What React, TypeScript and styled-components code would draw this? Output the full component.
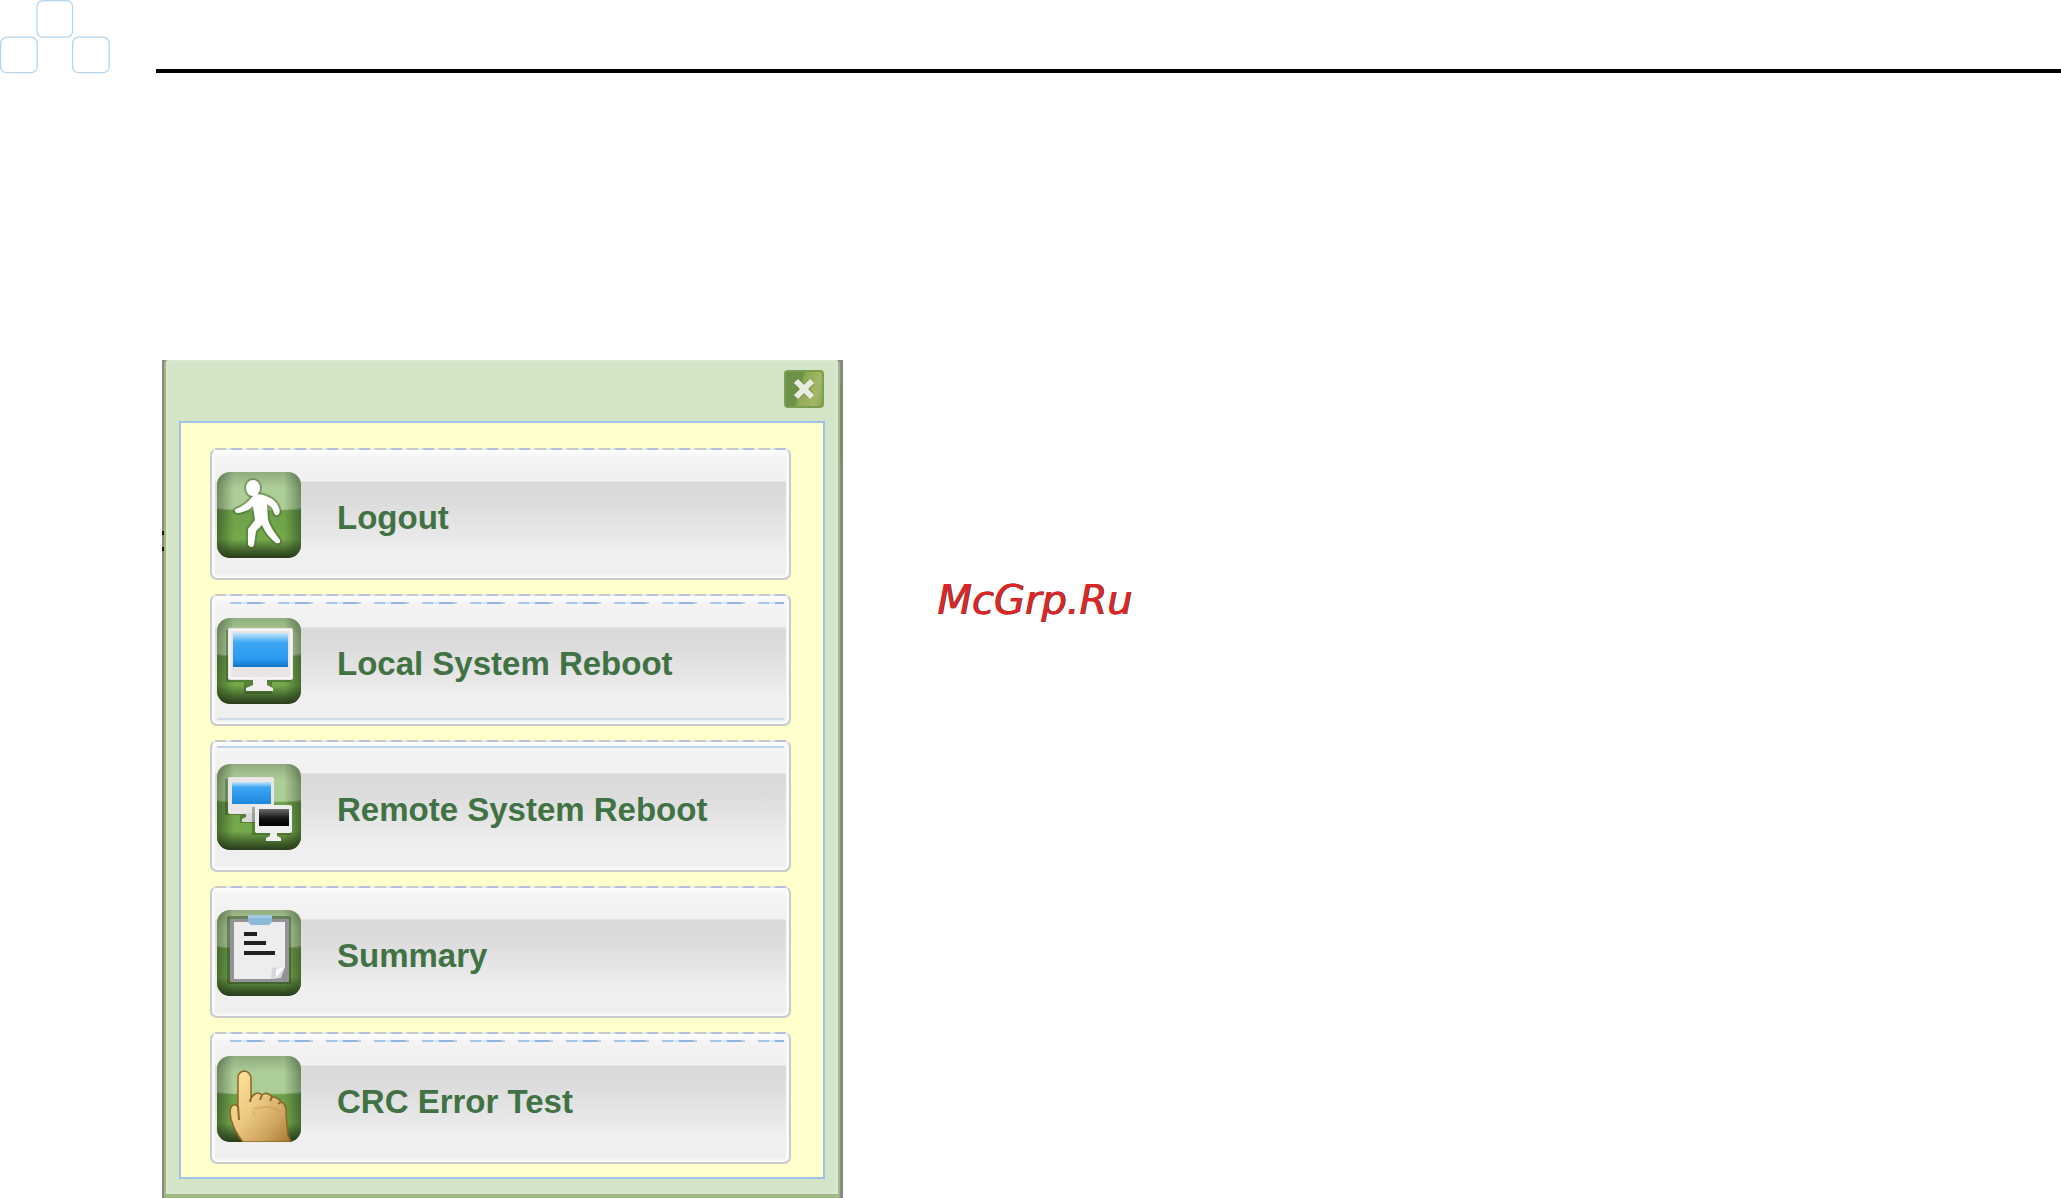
import React from "react";
import styled, { createGlobalStyle, css } from "styled-components";

const GlobalStyle = createGlobalStyle`
  *, *::before, *::after { box-sizing: border-box; }
  body { margin: 0; background: #ffffff; font-family: "Liberation Sans", Arial, sans-serif; }
`;

const Header = styled.header`
  display: flex;
  align-items: flex-end;
  gap: 46px;
`;

const Logo = styled.svg`
  display: block;
  flex: none;
`;

const Rule = styled.hr`
  flex: 1;
  height: 4px;
  margin: 0 0 1px;
  border: 0;
  background: #000000;
`;

const Main = styled.main`
  display: flex;
  align-items: flex-start;
  gap: 94px;
  padding: 286px 0 0 162px;
`;

const Dialog = styled.section`
  flex: none;
  width: 681px;
  padding: 0 3px 0 2px;
  background:
    linear-gradient(#201810, #201810) 0 171px / 2px 4px no-repeat,
    linear-gradient(#201810, #201810) 0 187px / 2px 4px no-repeat,
    linear-gradient(#83886c, #83886c) 100% 24px / 3px 79px no-repeat,
    #898989;
`;

const Frame = styled.div`
  padding: 0 13px 15px;
  border: solid #9dba85;
  border-width: 0 2px 4px;
  border-radius: 4px 4px 0 0;
  background: #d4e4c7;
  box-shadow: inset 0 0 3px 2px #dce8d4;
  display: flex;
  flex-direction: column;
`;

const TitleBar = styled.div`
  display: flex;
  justify-content: flex-end;
  padding: 10px 1px 13px 0;
`;

const CloseButton = styled.button`
  display: flex;
  align-items: center;
  justify-content: center;
  width: 40px;
  height: 38px;
  padding: 0;
  border: 2px solid #7a9f50;
  border-radius: 4px;
  background: linear-gradient(105deg, #6c9148 0 38%, #8faa52 46%, #a5b766 80%, #8ba653);
  cursor: pointer;
`;

const Menu = styled.nav`
  display: flex;
  flex-direction: column;
  gap: 14px;
  padding: 25px 32px 13px 29px;
  border: 2px solid #a0c2e6;
  background: #ffffcb;
`;

type Trim = "plain" | "dashed" | "dashedLined" | "lined";

const innerDashes = css`
  repeating-linear-gradient(90deg, transparent 0 13px, #a9c6ea 13px 24px, #d2e8fa 24px 30px, #8fb5e6 30px 44px, #c3cbd4 44px 48px)
  5px 6px / 567px 2px no-repeat,
`;

const trims = {
  plain: css``,
  dashed: innerDashes,
  dashedLined: css`
    ${innerDashes}
    linear-gradient(#cfdaea, #cfdaea) 5px 122px / 567px 2px no-repeat,
  `,
  lined: css`linear-gradient(#bdd2ef, #bdd2ef) 5px 4px / 567px 2px no-repeat,`,
};

const MenuButton = styled.button<{ $trim: Trim }>`
  display: flex;
  align-items: center;
  gap: 36px;
  height: 132px;
  padding: 2px 5px 0;
  border: 2px solid #c9cacf;
  border-top-color: transparent;
  border-radius: 7px;
  background:
    ${({ $trim }) => trims[$trim]}
    linear-gradient(
      #fdfdfd 0, #f4f4f4 8px, #f0f0f0 31px, #d9d9d9 32px, #dcdcdc 52px,
      #e9e9e9 88px, #efefef 100px, #efefef 123px, #fbfbfb 128px
    ) padding-box,
    repeating-linear-gradient(90deg, #e6e7e6 0 5px, #c9c9c6 5px 16px, #e6e7e6 16px 21px, #b4c0d4 21px 32px) border-box;
  box-shadow: inset 4px 0 1px -1px #fafafc, inset -4px 0 1px -1px #fafafc;
  color: #417243;
  font: bold 33px/40px "Liberation Sans", Arial, sans-serif;
  text-align: left;
  cursor: pointer;
`;

const Icon = styled.svg`
  display: block;
  flex: none;
`;

const Label = styled.span`
  padding-top: 5px;
`;

const Watermark = styled.p`
  margin: 216px 0 0;
  color: #de2525;
  font: italic 40px/48px "DejaVu Sans", Verdana, sans-serif;
  text-shadow: 1px 0 0 #5b3038;
`;

function Tile({ children }: { children: React.ReactNode }) {
  const id = React.useId();
  return (
    <Icon width="84" height="86" viewBox="0 0 84 86" aria-hidden="true">
      <defs>
        <linearGradient id={`${id}base`} x1="0" y1="0" x2="0" y2="1">
          <stop offset="0" stopColor="#8ba878" />
          <stop offset="0.2" stopColor="#a4c88c" />
          <stop offset="0.43" stopColor="#9bc37f" />
          <stop offset="0.45" stopColor="#6d9f4a" />
          <stop offset="0.78" stopColor="#75aa4b" />
          <stop offset="0.92" stopColor="#40602a" />
          <stop offset="1" stopColor="#293b1c" />
        </linearGradient>
        <linearGradient id={`${id}side`} x1="0" y1="0" x2="1" y2="0">
          <stop offset="0" stopColor="#263c1b" stopOpacity="0.55" />
          <stop offset="0.2" stopColor="#263c1b" stopOpacity="0" />
          <stop offset="0.8" stopColor="#263c1b" stopOpacity="0" />
          <stop offset="1" stopColor="#263c1b" stopOpacity="0.55" />
        </linearGradient>
        <linearGradient id={`${id}gloss`} x1="0" y1="0" x2="0" y2="1">
          <stop offset="0" stopColor="#ffffff" stopOpacity="0.05" />
          <stop offset="1" stopColor="#ffffff" stopOpacity="0.18" />
        </linearGradient>
      </defs>
      <rect width="84" height="86" rx="13" fill={`url(#${id}base)`} />
      <rect width="84" height="86" rx="13" fill={`url(#${id}side)`} />
      <path d="M0 13A13 13 0 0 1 13 0H71A13 13 0 0 1 84 13V36Q42 42 0 36Z" fill={`url(#${id}gloss)`} />
      {children}
    </Icon>
  );
}

function LogoutIcon() {
  const body = (
    <>
      <ellipse cx="36" cy="16" rx="7" ry="8" />
      <path d="M36 24Q40 21 46 23Q56 26 60 32Q64 39 62 42Q59 45 57 41Q56 35 50 32L51 48Q54 57 63 68Q64 72 59 71Q49 63 45 53L39 59L37 73Q35 77 31 73L31 57L38 48L36 34Q30 40 20 41Q16 39 19 37Q28 34 36 24Z" />
    </>
  );
  return (
    <Tile>
      <g fill="none" stroke="#42642e" strokeOpacity="0.45" strokeWidth="4">{body}</g>
      <g fill="#ffffff">{body}</g>
    </Tile>
  );
}

function ScreenIcon() {
  return (
    <Tile>
      <defs>
        <linearGradient id="screenBlue" x1="0" y1="0" x2="0" y2="1">
          <stop offset="0" stopColor="#c4e6fb" />
          <stop offset="0.28" stopColor="#3fa7f2" />
          <stop offset="0.75" stopColor="#2b9bf0" />
          <stop offset="1" stopColor="#1077c9" />
        </linearGradient>
      </defs>
      <path d="M9 12h65v52H55v12H27V64H9z" fill="#213618" opacity="0.35" />
      <rect x="11" y="10" width="65" height="52" rx="2" fill="#e9e5e7" />
      <rect x="13" y="12" width="61" height="48" fill="none" stroke="#f6f3f5" strokeWidth="2" />
      <rect x="16" y="15" width="55" height="34" fill="url(#screenBlue)" />
      <path d="M36 61H50V67L56 70V73H29V70L36 67Z" fill="#f0eeef" />
    </Tile>
  );
}

function RemoteIcon() {
  return (
    <Tile>
      <defs>
        <linearGradient id="remoteBlue" x1="0" y1="0" x2="0" y2="1">
          <stop offset="0" stopColor="#c4e6fb" />
          <stop offset="0.25" stopColor="#3ca5f2" />
          <stop offset="1" stopColor="#1f88df" />
        </linearGradient>
        <linearGradient id="remoteBlack" x1="0" y1="0" x2="0" y2="1">
          <stop offset="0" stopColor="#6b6b6b" />
          <stop offset="0.55" stopColor="#151515" />
          <stop offset="1" stopColor="#000000" />
        </linearGradient>
      </defs>
      <path d="M8 15h49v36H40v8H23v-8H8z" fill="#213618" opacity="0.35" />
      <rect x="11" y="13" width="46" height="37" rx="2" fill="#e9e6e7" />
      <rect x="15" y="18" width="39" height="22" fill="url(#remoteBlue)" />
      <path d="M29 49H40V58H25V55L29 53Z" fill="#dad8da" />
      <path d="M35 43h39v28H35z" fill="#213618" opacity="0.35" />
      <rect x="38" y="41" width="37" height="28" rx="2" fill="#efedee" />
      <rect x="42" y="45" width="30" height="17" fill="url(#remoteBlack)" />
      <path d="M53 68H60V72L64 74V77H49V74L53 72Z" fill="#efedee" />
    </Tile>
  );
}

function SummaryIcon() {
  return (
    <Tile>
      <rect x="10" y="6" width="64" height="68" rx="2" fill="#263e1b" opacity="0.45" />
      <rect x="13" y="9" width="59" height="63" fill="#929299" />
      <path d="M17 12H68V57L58 69H17Z" fill="#ededee" />
      <path d="M68 57L64 68L54 69L55 58Z" fill="#d8d8da" />
      <path d="M68 57L59 68V59Z" fill="#fafafa" />
      <path d="M31 5H55V11Q54 15 50 15H36Q32 15 31 11Z" fill="#8db9d8" />
      <path d="M31 5H55V8H31Z" fill="#a4c9e2" />
      <path d="M27 24H40M27 33H49M27 43H58" stroke="#202122" strokeWidth="4" />
    </Tile>
  );
}

function HandIcon() {
  return (
    <Tile>
      <defs>
        <linearGradient id="handSkin" x1="0" y1="0" x2="1" y2="1">
          <stop offset="0" stopColor="#ffe69b" />
          <stop offset="0.45" stopColor="#ecc981" />
          <stop offset="0.75" stopColor="#cda35d" />
          <stop offset="1" stopColor="#a9752e" />
        </linearGradient>
      </defs>
      <path
        d="M26 86Q17 75 14 63Q12 53 15 50Q18 47 21 51V20Q23 15 28 15Q33 16 34 22V42L37 39Q40 35 45 39Q50 35 55 41Q61 41 64 46Q70 48 69 58L71 79L74 86Z"
        fill="url(#handSkin)"
        stroke="#8d6529"
        strokeWidth="1.5"
      />
      <path d="M21 50L22 64M34 42L33 46M45 39L43 44M55 41L53 45M64 46L61 48" fill="none" stroke="#8f672c" strokeWidth="2" />
      <path d="M36 53Q50 48 63 55M36 55L38 60" fill="none" stroke="#b78a47" strokeWidth="2" opacity="0.3" />
    </Tile>
  );
}

const items: { label: string; trim: Trim; Glyph: () => React.ReactElement }[] = [
  { label: "Logout", trim: "plain", Glyph: LogoutIcon },
  { label: "Local System Reboot", trim: "dashedLined", Glyph: ScreenIcon },
  { label: "Remote System Reboot", trim: "lined", Glyph: RemoteIcon },
  { label: "Summary", trim: "plain", Glyph: SummaryIcon },
  { label: "CRC Error Test", trim: "dashed", Glyph: HandIcon },
];

export default function App() {
  return (
    <>
      <GlobalStyle />
      <Header>
        <Logo width="110" height="74" viewBox="0 0 110 74" aria-hidden="true">
          <g fill="none" stroke="#b4d5ee" strokeWidth="1.3">
            <rect x="37" y="0.6" width="35.6" height="36.6" rx="6" />
            <rect x="0.6" y="37.2" width="36.6" height="35.4" rx="6" />
            <rect x="72.6" y="37.2" width="36.6" height="35.4" rx="6" />
          </g>
        </Logo>
        <Rule />
      </Header>
      <Main>
        <Dialog aria-label="System menu">
          <Frame>
            <TitleBar>
              <CloseButton type="button" aria-label="Close">
                <svg width="22" height="22" viewBox="0 0 22 22" aria-hidden="true">
                  <path d="M4 4L18 18M18 4L4 18" stroke="#55753a" strokeWidth="8" opacity="0.4" />
                  <path d="M3 3L19 19M19 3L3 19" stroke="#e8ebdf" strokeWidth="6" />
                </svg>
              </CloseButton>
            </TitleBar>
            <Menu>
              {items.map(({ label, trim, Glyph }) => (
                <MenuButton key={label} type="button" $trim={trim}>
                  <Glyph />
                  <Label>{label}</Label>
                </MenuButton>
              ))}
            </Menu>
          </Frame>
        </Dialog>
        <Watermark>McGrp.Ru</Watermark>
      </Main>
    </>
  );
}
